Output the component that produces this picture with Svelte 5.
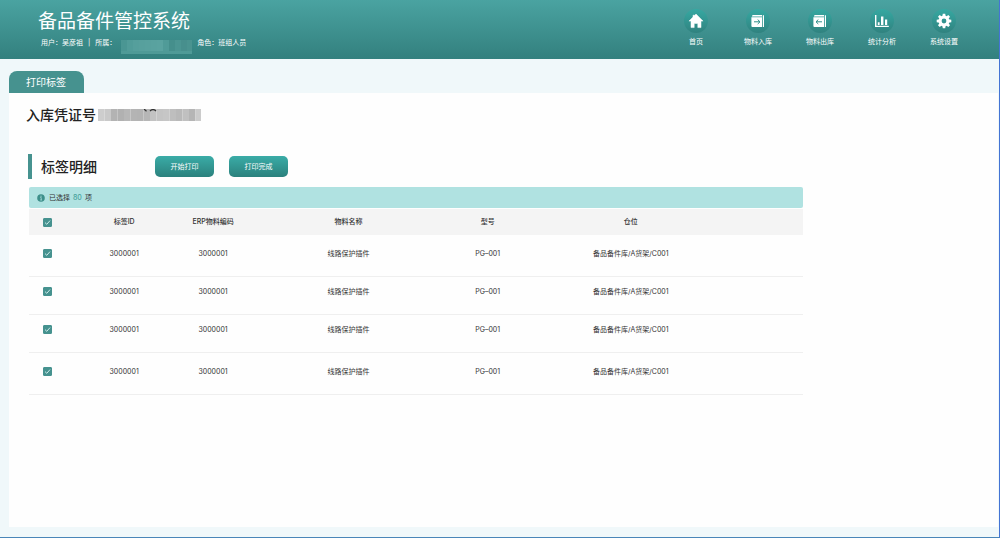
<script>
  const nav = [
    { label: '首页', icon: 'home' },
    { label: '物料入库', icon: 'inbound' },
    { label: '物料出库', icon: 'outbound' },
    { label: '统计分析', icon: 'chart' },
    { label: '系统设置', icon: 'gear' }
  ];
  const columns = ['标签ID', 'ERP物料编码', '物料名称', '型号', '仓位'];
  const base = ['3000001', '3000001', '线路保护插件', 'PG–001', '备品备件库/A货架/C001'];
  let rows = $state([
    { checked: true, compact: false, cells: base },
    { checked: true, compact: true, cells: base },
    { checked: true, compact: true, cells: base },
    { checked: true, compact: false, cells: base }
  ]);
  let all = $derived(rows.every((r) => r.checked));
  function toggleAll(e) {
    const value = e.currentTarget.checked;
    rows.forEach((r) => (r.checked = value));
  }
  const teeth = [0, 45, 90, 135, 180, 225, 270, 315];
  const greys = ['#cdcdcd', '#c9c9c9', '#b3b3b3', '#b1b1b1', '#b7b7b7', '#b4b4b4', '#b3b3b3', '#b6b6b6', '#c2c2c2', '#c4c4c4', '#c6c6c6', '#bebebe', '#b9b9b9', '#c0c0c0', '#b5b5b5', '#cbcbcb'];
  const teals = ['#4a9693', '#519c99', '#559f9c', '#57a09d', '#58a19e', '#59a29f', '#5aa3a0', '#509b98', '#458f8c', '#4b9592', '#478f8d', '#4a9390'];
</script>

<div class="page">
  <header>
    <div class="brand">
      <h1>备品备件管控系统</h1>
      <p class="user">
        <span>用户：吴彦祖</span><span>|</span><span>所属：</span>
        <svg class="org" width="71" height="14" viewBox="0 0 71 14" aria-hidden="true">
          {#each teals as c, i}
            <rect x={i * 6} y="0" width="6" height="12" fill={c} />
          {/each}
          <rect y="11" width="71" height="3" fill="#4f9a97" />
        </svg>
        <span>角色：班组人员</span>
      </p>
    </div>
    <nav>
      {#each nav as item}
        <a href="#{item.icon}">
          <span class="disc">
            <svg width="16" height="16" viewBox="0 0 16 16" aria-hidden="true">
              {#if item.icon === 'home'}
                <path fill="#fff" d="M8 1 15 8.1H13V14.6H9.8V10.4H6.2V14.6H3V8.1H1L5 4V2.2H6.6V2.5Z" stroke="#fff" stroke-width=".5" stroke-linejoin="round" />
              {:else if item.icon === 'inbound'}
                <path fill="#fff" d="M2.6 2H12V3.6H1.8ZM1.4 4.2H12V14H2.4Q1.4 14 1.4 13ZM12.8 2.2H14V14H12.8Z" />
                <path d="M4 8.8H10M7.7 6.6 10 8.8 7.7 11" fill="none" stroke="#2f8f8a" stroke-width="1" />
              {:else if item.icon === 'outbound'}
                <path fill="#fff" d="M2.6 2H12V3.6H1.8ZM1.4 4.2H12V14H2.4Q1.4 14 1.4 13ZM12.8 2.2H14V14H12.8Z" />
                <path d="M10 8.8H4M6.3 6.6 4 8.8 6.3 11" fill="none" stroke="#2f8f8a" stroke-width="1" />
              {:else if item.icon === 'chart'}
                <path fill="#fff" d="M1 2H2.4V12.8H14.8V14H1ZM3.8 9.2H5.6V12H3.8ZM7 3.6H9.4V12H7ZM11 6.4H13.2V12H11Z" />
              {:else}
                {#each teeth as t}
                  <path fill="#fff" d="M6.3 3.6 6.8.7H9.2L9.7 3.6Z" transform="rotate({t} 8 8)" />
                {/each}
                <circle cx="8" cy="8" r="3.9" fill="none" stroke="#fff" stroke-width="3" />
              {/if}
            </svg>
          </span>
          {item.label}
        </a>
      {/each}
    </nav>
  </header>

  <main>
    <div class="tab">打印标签</div>
    <section class="card">
      <h2>
        入库凭证号
        <svg width="103" height="12" viewBox="0 0 103 12" aria-hidden="true">
          {#each greys as c, i}
            <rect x={i * 6.5} y="0" width="6.5" height="12" fill={c} />
          {/each}
          <path d="M46 0 48.500 2.200M52 2Q55 -1 58 2" fill="none" stroke="#333" stroke-width="1.200" />
        </svg>
      </h2>

      <div class="bar">
        <h3>标签明细</h3>
        <button type="button">开始打印</button>
        <button type="button">打印完成</button>
      </div>

      <div class="list">
        <div class="info">
          <svg width="8" height="8" viewBox="0 0 8 8" aria-hidden="true">
            <circle cx="4" cy="4" r="3.800" fill="#3d8f8a" />
            <path d="M3.300 3.500H4.200V5.900M3.200 6H5.100" fill="none" stroke="#b0e2e1" stroke-width=".8" />
            <circle cx="4" cy="2.200" r=".6" fill="#b0e2e1" />
          </svg>
          <span>已选择 <b>80</b> 项</span>
        </div>
        <table>
          <colgroup>
            <col class="c-check" /><col class="c-id" /><col class="c-erp" /><col class="c-name" /><col class="c-model" /><col class="c-place" /><col />
          </colgroup>
          <thead>
            <tr>
              <th><input type="checkbox" aria-label="全选" checked={all} onchange={toggleAll} /></th>
              {#each columns as c}<th scope="col">{c}</th>{/each}
              <td></td>
            </tr>
          </thead>
          <tbody>
            {#each rows as row}
              <tr class:compact={row.compact}>
                <td><input type="checkbox" aria-label="选择" bind:checked={row.checked} /></td>
                {#each row.cells as cell}<td>{cell}</td>{/each}
                <td></td>
              </tr>
            {/each}
          </tbody>
        </table>
      </div>
    </section>
  </main>
</div>

<style>
  :global(body) { margin: 0; }
  .page {
    box-sizing: border-box;
    min-height: 100vh;
    display: flex;
    flex-direction: column;
    background: #f0f8fa;
    border-right: 1px solid #4474d4;
    border-bottom: 1px solid #4a86b8;
    font-family: Inter, "Noto Sans CJK SC", sans-serif;
    font-size: 7px;
    line-height: 14px;
    color: #333;
  }
  h1, h2, h3, p { margin: 0; }
  header {
    display: flex;
    justify-content: space-between;
    height: 59px;
    padding: 0 24px 0 38px;
    background: linear-gradient(#4aa3a1, #33807e);
    color: #fff;
  }
  .brand { padding-top: 8px; }
  h1 { font-size: 19px; line-height: 28px; font-weight: 400; }
  .user { display: flex; gap: 5px; padding-left: 3px; }
  .org { margin-top: 4px; }
  nav { display: flex; padding-top: 9px; }
  nav a {
    width: 62px;
    display: flex;
    flex-direction: column;
    align-items: center;
    gap: 2px;
    color: #fff;
    text-decoration: none;
  }
  .disc {
    width: 24px;
    height: 24px;
    border-radius: 50%;
    display: grid;
    place-items: center;
    background: linear-gradient(#36a8a2, #30827f);
  }
  main { flex: 1; display: flex; flex-direction: column; padding: 12px 1px 10px 9px; }
  .tab {
    align-self: flex-start;
    padding: 0 18px 0 17px;
    border-radius: 8px 8px 0 0;
    background: #46928f;
    color: #fff;
    font-size: 10px;
    line-height: 22px;
  }
  .card { flex: 1; background: #fefefe; padding: 12px 17px; }
  h2 { display: flex; align-items: center; gap: 2px; font-size: 14px; line-height: 20px; font-weight: 500; color: #222; }
  .bar { display: flex; align-items: center; gap: 15px; padding: 29px 0 8px 2px; }
  h3 {
    box-sizing: border-box;
    width: 112px;
    padding-left: 9px;
    border-left: 4px solid #46928f;
    font-size: 14px;
    line-height: 25px;
    font-weight: 500;
    color: #222;
  }
  button {
    width: 59px;
    height: 21px;
    padding: 0;
    border: 0;
    border-radius: 5px;
    background: linear-gradient(#3aaca7, #2b817d);
    color: #fff;
    font: inherit;
  }
  .list { width: 81%; margin-left: 3px; }
  .info {
    display: flex;
    align-items: center;
    gap: 4px;
    height: 21px;
    padding-left: 8px;
    margin-bottom: 1px;
    border-radius: 2px;
    background: #b0e2e1;
  }
  .info b { padding: 0 1px; color: #4aa39d; font-weight: 500; }
  table { width: 100%; table-layout: fixed; border-collapse: separate; border-spacing: 0; text-align: center; }
  .c-check { width: 4.8%; }
  .c-id { width: 15%; }
  .c-erp { width: 8%; }
  .c-name { width: 27%; }
  .c-model { width: 9%; }
  .c-place { width: 28%; }
  th, td { padding: 0; white-space: nowrap; }
  thead th, thead td { height: 26px; background: #f4f4f4; font-weight: 500; }
  tbody td { padding: 12px 0 15px; border-bottom: 1px solid #efefef; }
  .compact td { padding-top: 8px; }
  input {
    appearance: none;
    display: block;
    width: 9px;
    height: 9px;
    margin: 0 0 0 14px;
    border: 1px solid #46928f;
    border-radius: 1px;
    background: #fff;
  }
  tbody input { margin-top: 2px; margin-bottom: 3px; }
  input:checked {
    background: #46928f url("data:image/svg+xml,%3Csvg xmlns='http://www.w3.org/2000/svg' viewBox='0 0 7 7'%3E%3Cpath d='M1 3.600 2.800 5.300 6 1.600' fill='none' stroke='%23d8f4f2' stroke-width='.9'/%3E%3C/svg%3E") center / 7px 7px no-repeat;
  }
</style>
